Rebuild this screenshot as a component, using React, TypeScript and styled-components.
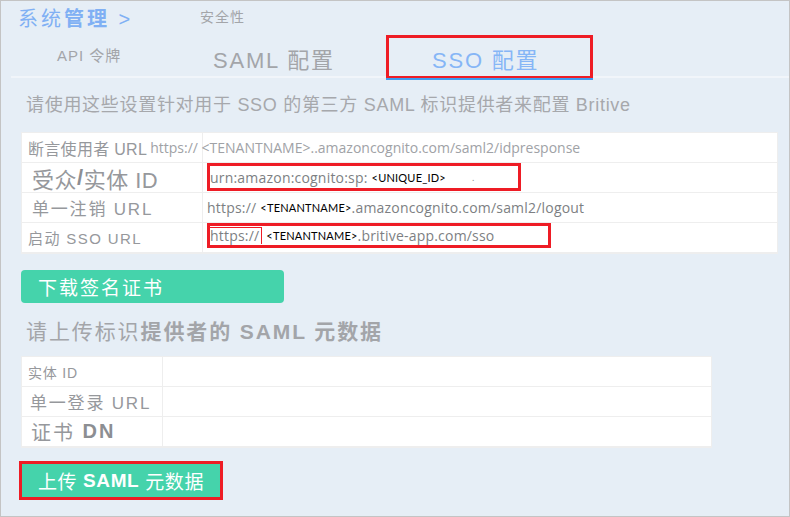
import styled, { createGlobalStyle } from "styled-components";

const GlobalStyle = createGlobalStyle`
  html, body {
    margin: 0;
    padding: 0;
    background: #ffffff;
  }
  * {
    box-sizing: border-box;
  }
`;

const CJK = `"Liberation Sans", "Noto Sans CJK SC", sans-serif`;
const VALUE = `"Open Sans", "Noto Sans CJK SC", sans-serif`;

const Page = styled.div`
  width: 790px;
  height: 517px;
  border: 1px solid #c4c4c4;
  background: #e6eef6;
  font-family: ${CJK};
  color: #a3a5a9;
  overflow: hidden;
`;

const Header = styled.div`
  display: flex;
  align-items: flex-start;
  padding: 5px 0 0 17px;
  height: 34px;
`;

const Crumb = styled.div`
  font-size: 20px;
  line-height: 26px;
  color: #80b0f4;
  width: 182px;
  letter-spacing: 3px;
  b {
    font-weight: 700;
  }
`;

const Section = styled.div`
  font-size: 14px;
  line-height: 22px;
  letter-spacing: 1px;
  color: #a3a5a9;
`;

const TabBar = styled.div`
  display: flex;
  align-items: flex-end;
  margin-left: 10px;
  height: 43px;
  border-bottom: 2px solid #f1f5fa;
`;

const Tab = styled.div<{ $w: number; $pad: number; $size: number; $active?: boolean }>`
  position: relative;
  width: ${(p) => p.$w}px;
  padding-left: ${(p) => p.$pad}px;
  font-size: ${(p) => p.$size}px;
  letter-spacing: ${(p) => (p.$size > 18 ? 1.8 : 1)}px;
  color: ${(p) => (p.$active ? "#86b6f6" : "#a3a5a9")};
  white-space: nowrap;
  ${(p) =>
    p.$active
      ? `
    height: 43px;
    margin-bottom: -2px;
    border: 3px solid #ee1c25;
    border-bottom-width: 2px;
    box-shadow: 0 2px 0 #3d9bf0;
    line-height: 46px;
  `
      : ``}
`;

const Description = styled.div`
  margin: 15px 0 0 25px;
  font-size: 18px;
  line-height: 24px;
  letter-spacing: 0.7px;
  color: #a6a8ac;
`;

const Table = styled.div<{ $w: number; $label: number }>`
  display: grid;
  grid-template-columns: ${(p) => p.$label}px 1fr;
  width: ${(p) => p.$w}px;
  margin-left: 20px;
  background: #ffffff;
  border: 1px solid #eeeeee;
`;

const Label = styled.div<{ $size: number; $pad?: number; $ls?: number }>`
  height: 30px;
  display: flex;
  align-items: center;
  padding-left: ${(p) => p.$pad ?? 6}px;
  font-size: ${(p) => p.$size}px;
  letter-spacing: ${(p) => p.$ls ?? 1}px;
  color: #96989c;
  white-space: nowrap;
  border-right: 1px solid #eeeeee;
  border-bottom: 1px solid #eeeeee;
  b {
    font-weight: 700;
    color: #8c8e92;
  }
`;

const Value = styled.div`
  height: 30px;
  display: flex;
  align-items: center;
  padding-left: 4px;
  border-bottom: 1px solid #eeeeee;
  white-space: nowrap;
  font-family: ${VALUE};
  font-size: 14px;
  letter-spacing: 0.2px;
  color: #7d7f83;
`;

const Spill = styled.span`
  font-family: ${VALUE};
  font-size: 14px;
  letter-spacing: 0;
  color: #a0a2a6;
  margin-left: 3px;
`;

const Marked = styled.div<{ $w: number; $h: number }>`
  display: flex;
  align-items: center;
  width: ${(p) => p.$w}px;
  height: ${(p) => p.$h}px;
  border: 3px solid #ee1c25;
  padding-left: 0;
  align-self: flex-start;
`;

const Tag = styled.span`
  font-family: "Lato", "Open Sans", sans-serif;
  font-size: 11px;
  letter-spacing: 0.2px;
  color: #000000;
  margin-left: 4px;
  background: #ffffff;
`;

const Framed = styled.span`
  border-top: 1px solid #ee1c25;
  border-right: 1px solid #ee1c25;
  padding: 0 2px 0 0;
  line-height: 16px;
`;

const Speck = styled.span`
  margin-left: 26px;
  font-size: 9px;
  color: #7d7f83;
`;

const Button = styled.div<{ $w: number; $marked?: boolean }>`
  display: flex;
  align-items: center;
  width: ${(p) => p.$w}px;
  height: ${(p) => (p.$marked ? 39 : 33)}px;
  background: #45d3ab;
  border-radius: ${(p) => (p.$marked ? 0 : 4)}px;
  border: ${(p) => (p.$marked ? "3px solid #ee1c25" : "none")};
  padding-left: ${(p) => (p.$marked ? 16 : 17)}px;
  color: #ffffff;
  font-size: 19px;
  letter-spacing: ${(p) => (p.$marked ? 0.6 : 2)}px;
  b {
    font-weight: 700;
  }
`;

const Heading = styled.div`
  margin: 16px 0 0 25px;
  font-size: 21px;
  line-height: 26px;
  color: #a3a5a9;
  letter-spacing: 1.9px;
  b {
    font-weight: 700;
  }
`;

export default function App() {
  return (
    <>
      <GlobalStyle />
      <Page>
        <Header>
          <Crumb>
            系统<b>管理</b> &gt;
          </Crumb>
          <Section>安全性</Section>
        </Header>

        <TabBar>
          <Tab $w={185} $pad={46} $size={15} style={{ paddingBottom: 11 }}>
            API 令牌
          </Tab>
          <Tab $w={190} $pad={17} $size={22} style={{ paddingBottom: 2 }}>
            SAML 配置
          </Tab>
          <Tab $w={207} $pad={43} $size={22} $active>
            SSO 配置
          </Tab>
        </TabBar>

        <Description>请使用这些设置针对用于 SSO 的第三方 SAML 标识提供者来配置 Britive</Description>

        <Table $w={757} $label={181} style={{ marginTop: 15 }}>
          <Label $size={16} $ls={0.3}>
            断言使用者 URL
            <Spill>
              https:// &lt;TENANTNAME&gt;..amazoncognito.com/saml2/idpresponse
            </Spill>
          </Label>
          <Value />
          <Label $size={22} $pad={10} $ls={0.5}>
            受众<b>/</b>实体 ID
          </Label>
          <Value>
            <Marked $w={314} $h={28}>
              urn:amazon:cognito:sp:<Tag>&lt;UNIQUE_ID&gt;</Tag>
              <Speck>.</Speck>
            </Marked>
          </Value>
          <Label $size={17} $pad={10} $ls={1.8}>
            单一注销 URL
          </Label>
          <Value>
            https://<Tag>&lt;TENANTNAME&gt;</Tag>.amazoncognito.com/saml2/logout
          </Value>
          <Label $size={15} $ls={1.4}>
            启动 SSO URL
          </Label>
          <Value>
            <Marked $w={344} $h={25}>
              <Framed>https://</Framed>
              <Tag>&lt;TENANTNAME&gt;</Tag>.britive-app.com/sso
            </Marked>
          </Value>
        </Table>

        <Button $w={263} style={{ margin: "16px 0 0 20px" }}>
          下载签名证书
        </Button>

        <Heading>
          请上传标识<b>提供者的 SAML 元数据</b>
        </Heading>

        <Table $w={691} $label={141} style={{ marginTop: 11 }}>
          <Label $size={14} $ls={0.8}>
            实体 ID
          </Label>
          <Value />
          <Label $size={17} $pad={8} $ls={1.8}>
            单一登录 URL
          </Label>
          <Value />
          <Label $size={20} $pad={9} $ls={2}>
            证书&nbsp;<b>DN</b>
          </Label>
          <Value />
        </Table>

        <Button $w={204} $marked style={{ margin: "13px 0 0 18px" }}>
          上传 <b>&nbsp;SAML&nbsp;</b> 元数据
        </Button>
      </Page>
    </>
  );
}
